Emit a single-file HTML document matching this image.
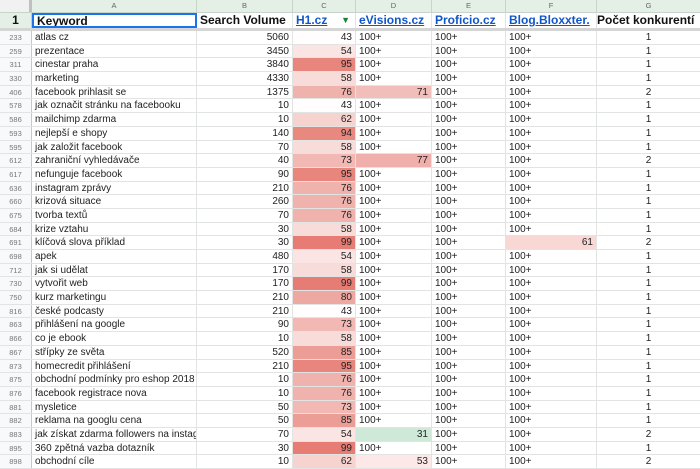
<!DOCTYPE html>
<html><head><meta charset="utf-8"><style>
*{margin:0;padding:0;box-sizing:border-box}
body{width:700px;height:469px;overflow:hidden;background:#fff;font-family:"Liberation Sans",Arial,sans-serif;position:relative}
.r{display:flex;height:13.7px;overflow:hidden;box-shadow:inset 0 -1px 0 #e2e3e3}
.c{border-right:1px solid #e2e3e3;font-size:10px;line-height:13px;height:12.7px;padding:0 3px;white-space:nowrap;overflow:hidden;color:#222}
.rh{width:32px;background:#f8f9fa;color:#777;font-size:7.5px;text-align:center;border-right:1px solid #c8c8c8}
.a{width:165px}.b{width:96px;text-align:right}.cc{width:63px;text-align:right}.d{width:76px}.e{width:74px}.f{width:91px}.g{width:103px;text-align:center;border-right:none}
.n{text-align:right}
#hdr{display:flex;height:13px;background:#e4efe6;border-bottom:1px solid #c8d4ca}
#hdr div{font-size:7.5px;color:#666;text-align:center;line-height:12px;border-right:1px solid #c8d4ca}
#h1{display:flex;border-bottom:3px solid #d5d5d5;height:18px}
#h1 .c{font-size:12px;font-weight:bold;line-height:15px;height:15px;color:#111}
#h1 .l{color:#1155cc;text-decoration:underline}
</style></head><body>
<div id="hdr"><div style="width:32px;background:#f1f1f1;border-right:3px solid #c0c0c0"></div><div style="width:165px">A</div><div style="width:96px">B</div><div style="width:63px">C</div><div style="width:76px">D</div><div style="width:74px">E</div><div style="width:91px">F</div><div style="width:103px;border:none">G</div></div>
<div id="h1"><div class="c rh" style="background:#e4efe6;line-height:15px">1</div><div class="c a" style="border:2px solid #1a73e8;line-height:12px">Keyword</div><div class="c b" style="text-align:left">Search Volume</div><div class="c cc l" style="text-align:left;position:relative">H1.cz<span style="position:absolute;right:5px;top:0;color:#188038;font-size:9px;text-decoration:none">▼</span></div><div class="c d l">eVisions.cz</div><div class="c e l">Proficio.cz</div><div class="c f l">Blog.Bloxxter.</div><div class="c g" style="text-align:left;padding:0">Počet konkurentí</div></div>
<div style="position:absolute;top:31px;left:0;width:700px">
<div class="r"><div class="c rh">233</div><div class="c a">atlas cz</div><div class="c b">5060</div><div class="c cc" style="background:#fffdfd">43</div><div class="c d">100+</div><div class="c e">100+</div><div class="c f">100+</div><div class="c g">1</div></div>
<div class="r"><div class="c rh">259</div><div class="c a">prezentace</div><div class="c b">3450</div><div class="c cc" style="background:#fae5e4">54</div><div class="c d">100+</div><div class="c e">100+</div><div class="c f">100+</div><div class="c g">1</div></div>
<div class="r"><div class="c rh">311</div><div class="c a">cinestar praha</div><div class="c b">3840</div><div class="c cc" style="background:#e8857d">95</div><div class="c d">100+</div><div class="c e">100+</div><div class="c f">100+</div><div class="c g">1</div></div>
<div class="r"><div class="c rh">330</div><div class="c a">marketing</div><div class="c b">4330</div><div class="c cc" style="background:#f8dcd9">58</div><div class="c d">100+</div><div class="c e">100+</div><div class="c f">100+</div><div class="c g">1</div></div>
<div class="r"><div class="c rh">406</div><div class="c a">facebook prihlasit se</div><div class="c b">1375</div><div class="c cc" style="background:#f0b2ad">76</div><div class="c d n" style="background:#f2beb9">71</div><div class="c e">100+</div><div class="c f">100+</div><div class="c g">2</div></div>
<div class="r"><div class="c rh">578</div><div class="c a">jak označit stránku na facebooku</div><div class="c b">10</div><div class="c cc" style="background:#fffdfd">43</div><div class="c d">100+</div><div class="c e">100+</div><div class="c f">100+</div><div class="c g">1</div></div>
<div class="r"><div class="c rh">586</div><div class="c a">mailchimp zdarma</div><div class="c b">10</div><div class="c cc" style="background:#f7d3d0">62</div><div class="c d">100+</div><div class="c e">100+</div><div class="c f">100+</div><div class="c g">1</div></div>
<div class="r"><div class="c rh">593</div><div class="c a">nejlepší e shopy</div><div class="c b">140</div><div class="c cc" style="background:#e8887f">94</div><div class="c d">100+</div><div class="c e">100+</div><div class="c f">100+</div><div class="c g">1</div></div>
<div class="r"><div class="c rh">595</div><div class="c a">jak založit facebook</div><div class="c b">70</div><div class="c cc" style="background:#f8dcd9">58</div><div class="c d">100+</div><div class="c e">100+</div><div class="c f">100+</div><div class="c g">1</div></div>
<div class="r"><div class="c rh">612</div><div class="c a">zahraniční vyhledávače</div><div class="c b">40</div><div class="c cc" style="background:#f2b9b4">73</div><div class="c d n" style="background:#f0afaa">77</div><div class="c e">100+</div><div class="c f">100+</div><div class="c g">2</div></div>
<div class="r"><div class="c rh">617</div><div class="c a">nefunguje facebook</div><div class="c b">90</div><div class="c cc" style="background:#e8857d">95</div><div class="c d">100+</div><div class="c e">100+</div><div class="c f">100+</div><div class="c g">1</div></div>
<div class="r"><div class="c rh">636</div><div class="c a">instagram zprávy</div><div class="c b">210</div><div class="c cc" style="background:#f0b2ad">76</div><div class="c d">100+</div><div class="c e">100+</div><div class="c f">100+</div><div class="c g">1</div></div>
<div class="r"><div class="c rh">660</div><div class="c a">krizová situace</div><div class="c b">260</div><div class="c cc" style="background:#f0b2ad">76</div><div class="c d">100+</div><div class="c e">100+</div><div class="c f">100+</div><div class="c g">1</div></div>
<div class="r"><div class="c rh">675</div><div class="c a">tvorba textů</div><div class="c b">70</div><div class="c cc" style="background:#f0b2ad">76</div><div class="c d">100+</div><div class="c e">100+</div><div class="c f">100+</div><div class="c g">1</div></div>
<div class="r"><div class="c rh">684</div><div class="c a">krize vztahu</div><div class="c b">30</div><div class="c cc" style="background:#f8dcd9">58</div><div class="c d">100+</div><div class="c e">100+</div><div class="c f">100+</div><div class="c g">1</div></div>
<div class="r"><div class="c rh">691</div><div class="c a">klíčová slova příklad</div><div class="c b">30</div><div class="c cc" style="background:#e67c73">99</div><div class="c d">100+</div><div class="c e">100+</div><div class="c f n" style="background:#f8d7d4">61</div><div class="c g">2</div></div>
<div class="r"><div class="c rh">698</div><div class="c a">apek</div><div class="c b">480</div><div class="c cc" style="background:#fae5e4">54</div><div class="c d">100+</div><div class="c e">100+</div><div class="c f">100+</div><div class="c g">1</div></div>
<div class="r"><div class="c rh">712</div><div class="c a">jak si udělat</div><div class="c b">170</div><div class="c cc" style="background:#f8dcd9">58</div><div class="c d">100+</div><div class="c e">100+</div><div class="c f">100+</div><div class="c g">1</div></div>
<div class="r"><div class="c rh">730</div><div class="c a">vytvořit web</div><div class="c b">170</div><div class="c cc" style="background:#e67c73">99</div><div class="c d">100+</div><div class="c e">100+</div><div class="c f">100+</div><div class="c g">1</div></div>
<div class="r"><div class="c rh">750</div><div class="c a">kurz marketingu</div><div class="c b">210</div><div class="c cc" style="background:#eea8a2">80</div><div class="c d">100+</div><div class="c e">100+</div><div class="c f">100+</div><div class="c g">1</div></div>
<div class="r"><div class="c rh">816</div><div class="c a">české podcasty</div><div class="c b">210</div><div class="c cc" style="background:#fffdfd">43</div><div class="c d">100+</div><div class="c e">100+</div><div class="c f">100+</div><div class="c g">1</div></div>
<div class="r"><div class="c rh">863</div><div class="c a">přihlášení na google</div><div class="c b">90</div><div class="c cc" style="background:#f2b9b4">73</div><div class="c d">100+</div><div class="c e">100+</div><div class="c f">100+</div><div class="c g">1</div></div>
<div class="r"><div class="c rh">866</div><div class="c a">co je ebook</div><div class="c b">10</div><div class="c cc" style="background:#f8dcd9">58</div><div class="c d">100+</div><div class="c e">100+</div><div class="c f">100+</div><div class="c g">1</div></div>
<div class="r"><div class="c rh">867</div><div class="c a">střípky ze světa</div><div class="c b">520</div><div class="c cc" style="background:#ec9d96">85</div><div class="c d">100+</div><div class="c e">100+</div><div class="c f">100+</div><div class="c g">1</div></div>
<div class="r"><div class="c rh">873</div><div class="c a">homecredit přihlášení</div><div class="c b">210</div><div class="c cc" style="background:#e8857d">95</div><div class="c d">100+</div><div class="c e">100+</div><div class="c f">100+</div><div class="c g">1</div></div>
<div class="r"><div class="c rh">875</div><div class="c a">obchodní podmínky pro eshop 2018</div><div class="c b">10</div><div class="c cc" style="background:#f0b2ad">76</div><div class="c d">100+</div><div class="c e">100+</div><div class="c f">100+</div><div class="c g">1</div></div>
<div class="r"><div class="c rh">876</div><div class="c a">facebook registrace nova</div><div class="c b">10</div><div class="c cc" style="background:#f0b2ad">76</div><div class="c d">100+</div><div class="c e">100+</div><div class="c f">100+</div><div class="c g">1</div></div>
<div class="r"><div class="c rh">881</div><div class="c a">mysletice</div><div class="c b">50</div><div class="c cc" style="background:#f2b9b4">73</div><div class="c d">100+</div><div class="c e">100+</div><div class="c f">100+</div><div class="c g">1</div></div>
<div class="r"><div class="c rh">882</div><div class="c a">reklama na googlu cena</div><div class="c b">50</div><div class="c cc" style="background:#ec9d96">85</div><div class="c d">100+</div><div class="c e">100+</div><div class="c f">100+</div><div class="c g">1</div></div>
<div class="r"><div class="c rh">883</div><div class="c a">jak získat zdarma followers na instagram</div><div class="c b">70</div><div class="c cc" style="background:#fae5e4">54</div><div class="c d n" style="background:#cfe9d8">31</div><div class="c e">100+</div><div class="c f">100+</div><div class="c g">2</div></div>
<div class="r"><div class="c rh">895</div><div class="c a">360 zpětná vazba dotazník</div><div class="c b">30</div><div class="c cc" style="background:#e67c73">99</div><div class="c d">100+</div><div class="c e">100+</div><div class="c f">100+</div><div class="c g">1</div></div>
<div class="r"><div class="c rh">898</div><div class="c a">obchodní cíle</div><div class="c b">10</div><div class="c cc" style="background:#f7d3d0">62</div><div class="c d n" style="background:#fbe8e7">53</div><div class="c e">100+</div><div class="c f">100+</div><div class="c g">2</div></div>
</div>
</body></html>
